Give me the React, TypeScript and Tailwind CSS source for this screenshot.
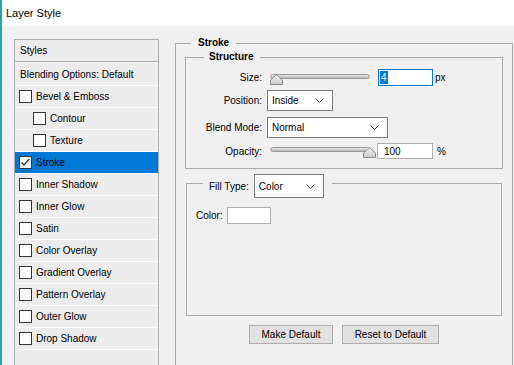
import React from 'react';

const effects: { label: string; indent?: boolean; checked?: boolean }[] = [
  { label: 'Bevel & Emboss' },
  { label: 'Contour', indent: true },
  { label: 'Texture', indent: true },
  { label: 'Stroke', checked: true },
  { label: 'Inner Shadow' },
  { label: 'Inner Glow' },
  { label: 'Satin' },
  { label: 'Color Overlay' },
  { label: 'Gradient Overlay' },
  { label: 'Pattern Overlay' },
  { label: 'Outer Glow' },
  { label: 'Drop Shadow' },
];

function Checkbox({ checked }: { checked?: boolean }) {
  return (
    <span className="flex h-[13px] w-[13px] shrink-0 items-center justify-center border border-[#333] bg-white">
      {checked ? (
        <svg width="11" height="11" viewBox="0 0 11 11" fill="none">
          <path d="M1.5 5.5 4 8l5.5-6" stroke="#222" strokeWidth="1.2" />
        </svg>
      ) : null}
    </span>
  );
}

function Chevron() {
  return (
    <svg width="9" height="5" viewBox="0 0 9 5" fill="none" className="shrink-0">
      <path d="M0.5 0.5 4.5 4.5 8.5 0.5" stroke="#444" strokeWidth="1" />
    </svg>
  );
}

function Select({ value, width, height }: { value: string; width: string; height: string }) {
  return (
    <div
      className={`flex items-center justify-between border border-[#7a7a7a] bg-white pl-[4px] pr-[8px] ${width} ${height}`}
    >
      <span>{value}</span>
      <Chevron />
    </div>
  );
}

function Slider({ at }: { at: 'start' | 'end' }) {
  return (
    <div className="relative h-[14px] w-[100px]">
      <div className="absolute left-0 right-0 top-[3px] h-[5px] rounded-[3px] border border-[#9a9a9a] bg-gradient-to-b from-[#e8e8e8] to-[#b8b8b8]" />
      <svg
        width="13"
        height="11"
        viewBox="0 0 13 11"
        className={`absolute top-[3px] ${at === 'start' ? 'left-0' : 'right-[-6px]'}`}
      >
        <defs>
          <linearGradient id={`th-${at}`} x1="0" y1="0" x2="0" y2="1">
            <stop offset="0" stopColor="#f4f4f4" />
            <stop offset="1" stopColor="#c8c8c8" />
          </linearGradient>
        </defs>
        <path d="M0.5 10.5V6L6.5 0.8 12.5 6v4.5Z" fill={`url(#th-${at})`} stroke="#8a8a8a" />
      </svg>
    </div>
  );
}

export default function App() {
  return (
    <div
      className="relative h-[365px] w-[514px] overflow-hidden border-l-2 border-[#2a9fae] bg-[#f0f0f0] text-[10px] text-black"
      style={{ fontFamily: '"Liberation Sans", Arial, sans-serif' }}
    >
      <div className="flex h-[26px] items-center bg-white pl-[4px] text-[11px]">Layer Style</div>

      <div className="flex pl-[12px] pt-[10px]">
        {/* left list */}
        <div className="mt-[3px] h-[340px] w-[145px] shrink-0 border border-[#acacac] bg-[#ececec]">
          <div className="flex h-[22px] items-center border-b border-[#a8a8a8] pl-[5px]">Styles</div>
          <div className="flex h-[24px] items-center border-t border-b border-white pl-[5px] [border-bottom-color:#fbfbfb]">
            Blending Options: Default
          </div>
          {effects.map((e) => (
            <div
              key={e.label}
              className={`flex h-[22px] items-center gap-[4px] border-b border-[#fbfbfb] ${
                e.indent ? 'pl-[18px]' : 'pl-[4px]'
              } ${e.checked ? 'bg-[#0078d7]' : ''}`}
            >
              <Checkbox checked={e.checked} />
              <span>{e.label}</span>
            </div>
          ))}
        </div>

        {/* right side */}
        <fieldset className="ml-[16px] h-[345px] w-[338px] shrink-0 border border-[#a9a9a9]">
          <legend className="ml-[15px] pl-[7px] pr-[7px] text-[10px] font-bold leading-[14px]">Stroke</legend>

          <fieldset className="ml-[9px] w-[318px] border border-[#a9a9a9] pb-[8px]">
            <legend className="ml-[18px] pl-[5px] pr-[7px] font-bold leading-[14px]">Structure</legend>

            <div className="mt-[4px] flex h-[19px] items-center">
              <span className="w-[76px] text-right">Size:</span>
              <div className="ml-[8px]">
                <Slider at="start" />
              </div>
              <div className="ml-[8px] flex h-[17px] w-[55px] items-center border border-[#0078d7] bg-white pl-[1px]">
                <span className="bg-[#0078d7] px-[1px] leading-[13px] text-white">4</span>
              </div>
              <span className="ml-[2px]">px</span>
            </div>

            <div className="mt-[3px] flex h-[21px] items-center">
              <span className="w-[76px] text-right">Position:</span>
              <div className="ml-[5px]">
                <Select value="Inside" width="w-[66px]" height="h-[21px]" />
              </div>
            </div>

            <div className="mt-[6px] flex h-[21px] items-center">
              <span className="w-[76px] text-right">Blend Mode:</span>
              <div className="ml-[5px]">
                <Select value="Normal" width="w-[121px]" height="h-[21px]" />
              </div>
            </div>

            <div className="mt-[4px] flex h-[18px] items-center">
              <span className="w-[76px] text-right">Opacity:</span>
              <div className="ml-[8px]">
                <Slider at="end" />
              </div>
              <div className="ml-[7px] flex h-[16px] w-[56px] items-center border border-[#adadad] bg-white pl-[6px]">
                100
              </div>
              <span className="ml-[4px]">%</span>
            </div>
          </fieldset>

          <fieldset className="ml-[10px] mt-[5px] h-[142px] w-[316px] border border-[#a9a9a9]">
            <legend className="ml-[16px] h-[18px] pl-[6px] pr-[8px]">
              <div className="flex h-[24px] items-center">
                <span>Fill Type:</span>
                <div className="ml-[5px]">
                  <Select value="Color" width="w-[70px]" height="h-[24px]" />
                </div>
              </div>
            </legend>
            <div className="mt-[15px] flex h-[17px] items-center pl-[9px]">
              <span>Color:</span>
              <div className="ml-[4px] h-[17px] w-[44px] border border-[#adadad] bg-white" />
            </div>
          </fieldset>

          <div className="mt-[9px] flex justify-center gap-[9px]">
            <button className="h-[19px] w-[84px] border border-[#adadad] bg-[#e1e1e1]">Make Default</button>
            <button className="h-[19px] w-[97px] border border-[#adadad] bg-[#e1e1e1]">Reset to Default</button>
          </div>
        </fieldset>
      </div>
    </div>
  );
}
